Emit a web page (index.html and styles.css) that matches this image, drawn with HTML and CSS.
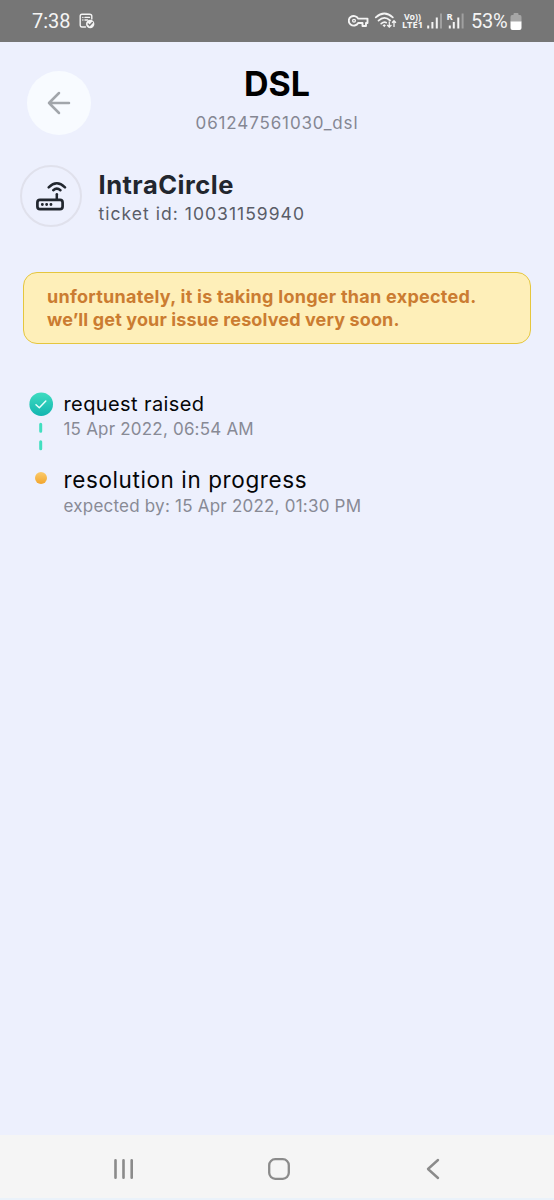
FILE: index.html
```html
<!DOCTYPE html>
<html lang="en">
<head>
<meta charset="utf-8">
<title>DSL ticket</title>
<link rel="stylesheet" href="styles.css">
</head>
<body>
<div class="screen">
  <div class="status">
    <span class="clock">7:38</span>
    <svg class="note-icon" width="17" height="17" viewBox="0 0 17 17" fill="none" stroke="#f4f4f4" stroke-width="1.4" stroke-linecap="round">
      <path d="M6.5 14H3Q1.2 14 1.2 12V3Q1.2 1.2 3 1.2H10.5Q12.8 1.2 12.8 3V6"/>
      <path d="M3.8 4.4h.1M6 4.4h4.5M3.8 7h.1M6 7h2.5"/>
      <circle cx="11.2" cy="11" r="4.2" fill="#f4f4f4" stroke="none"/>
      <path d="M9.2 11l1.4 1.4 2.8-2.8" stroke="#767676"/>
    </svg>
    <svg class="sys-icons" width="118" height="22" viewBox="0 0 118 22" fill="none" stroke="#f4f4f4">
      <path d="M10.2 8.6H19.5V13H18V16H14.5V13H10.2A5 4.8 0 1 1 10.2 8.6Z" stroke-width="1.9" stroke-linejoin="round"/>
      <circle cx="6" cy="10.8" r="1.4" stroke-width="1.3"/>
      <g stroke-width="1.7" stroke-linecap="round">
        <path d="M27.8 7.4Q36.3-.4 44.8 7.4"/><path d="M30.5 10.7Q36.3 5.2 42.1 10.5"/><path d="M33.2 13.6Q36.3 11 38.2 12.7"/>
      </g>
      <path d="M34.5 15.2l1.8 2 1.6-2-1.6-1Z" fill="#f4f4f4" stroke="none"/>
      <path d="M41.3 11.5V17M39.2 15l2.1 2.1 2.1-2.1M46 17v-6M44.1 12.8l1.9-2 1.9 2" stroke-width="1.3"/>
      <g class="net-label" fill="#f4f4f4" stroke="none">
        <text x="56" y="9.6" textLength="17" lengthAdjust="spacingAndGlyphs">Vo))</text>
        <text x="54" y="18.4" textLength="21" lengthAdjust="spacingAndGlyphs">LTE1</text>
        <text x="98.5" y="9.6">R</text>
      </g>
      <g stroke-width="2">
        <path d="M80.2 15.5V18.5M84.4 12V18.5M88.8 7.5V18.5"/>
        <path d="M93 3.5V18.5" stroke="#a0a0a0"/>
        <path d="M101.8 15.5V18.5M105.8 12V18.5M110.3 7.5V18.5"/>
        <path d="M114.6 3.5V18.5" stroke="#a0a0a0"/>
      </g>
    </svg>
    <span class="percent">53%</span>
    <svg class="battery" width="12" height="18" viewBox="0 0 12 18">
      <path d="M3.5 1Q3.5 0 4.5 0H7.5Q8.5 0 8.5 1V2H10Q11.5 2 11.5 4V9H.5V4Q.5 2 2 2H3.5Z" fill="#a6a6a6"/>
      <path d="M.5 8.6H11.5V15Q11.5 17 9.5 17H2.5Q.5 17 .5 15Z" fill="#fff"/>
    </svg>
  </div>

  <header class="header">
    <div class="back">
      <svg width="24" height="24" viewBox="0 0 24 24" fill="none" stroke="#a2a6ab" stroke-width="2.5" stroke-linecap="round" stroke-linejoin="round"><path d="M22 12H2M12 2L2 12L12 22"/></svg>
    </div>
    <div class="heading">
      <h1 class="title">DSL</h1>
      <div class="account">061247561030_dsl</div>
    </div>
  </header>

  <section class="ticket">
    <div class="device">
      <svg width="32" height="32" viewBox="0 0 32 32" fill="none" stroke="#22272f" stroke-linecap="round">
        <rect x="2.4" y="19.8" width="25.2" height="9.4" rx="2.6" stroke-width="2.7"/>
        <path d="M21.8 18.8V14.2" stroke-width="2.5"/>
        <path d="M13.7 7.3Q21.8-.8 30 7.3M18.3 10.2Q21.8 7.1 25.4 10.2" stroke-width="2.5"/>
        <path d="M7.3 24.5h.1M11.6 24.5h.1M15.9 24.5h.1" stroke-width="2.8"/>
      </svg>
    </div>
    <div class="ticket-text">
      <div class="name">IntraCircle</div>
      <div class="ticket-id">ticket id: 10031159940</div>
    </div>
  </section>

  <section class="alert">
    <div class="alert-first">unfortunately, it is taking longer than expected.</div>
    <div class="alert-second">we’ll get your issue resolved very soon.</div>
  </section>

  <section class="timeline">
    <div class="step">
      <svg class="marker" width="24" height="62" viewBox="0 0 24 62" fill="none" stroke-linecap="round">
        <defs><linearGradient id="teal" x1="0" y1="0" x2="0" y2="1"><stop offset="0" stop-color="#3fdcc0"/><stop offset="1" stop-color="#12b5b0"/></linearGradient></defs>
        <circle cx="12.2" cy="12.2" r="11.8" fill="url(#teal)"/>
        <path d="M7 12.7l3.3 3.1 6.5-6.7" stroke="#e9fffc" stroke-width="1.5" stroke-linejoin="round"/>
        <path d="M11.7 32.3V39.2M11.7 49.8V56.7" stroke="#42dfc0" stroke-width="3"/>
      </svg>
      <div>
        <div class="step-title">request raised</div>
        <div class="step-date">15 Apr 2022, 06:54 AM</div>
      </div>
    </div>
    <div class="step current">
      <div class="marker"><div class="dot"></div></div>
      <div>
        <div class="step-title">resolution in progress</div>
        <div class="step-date">expected by: 15 Apr 2022, 01:30 PM</div>
      </div>
    </div>
  </section>

  <nav class="navbar">
    <svg width="20" height="22" viewBox="0 0 20 22" fill="none" stroke="#8b8b8b" stroke-width="2.6" stroke-linecap="round"><path d="M1.5 2.3V19.7M9.5 2.3V19.7M17.7 2.3V19.7"/></svg>
    <svg width="24" height="24" viewBox="0 0 24 24" fill="none" stroke="#8b8b8b" stroke-width="2.3"><rect x="2.2" y="2.2" width="19.6" height="19.6" rx="6"/></svg>
    <svg width="20" height="22" viewBox="0 0 20 22" fill="none" stroke="#8b8b8b" stroke-width="2.4" stroke-linecap="round" stroke-linejoin="round"><path d="M15 2L5 11L15 20"/></svg>
  </nav>
</div>
</body>
</html>
```
FILE: styles.css
```css
* { box-sizing: border-box; }
body { margin: 0; font-family: Inter, sans-serif; }
svg { display: block; flex: none; }
.screen { width: 554px; height: 1200px; display: flex; flex-direction: column; background: #edf0fd; white-space: nowrap; }

.status { height: 42px; flex: none; display: flex; align-items: center; padding: 0 32px 0 32px; background: #767676; color: #f4f4f4; font-family: Roboto, sans-serif; font-size: 20px; }
.clock { width: 47px; }
.sys-icons { margin-left: auto; margin-right: 5px; }
.net-label { font-family: "Noto Sans", sans-serif; font-size: 9.5px; font-weight: 700; }
.percent { width: 39px; letter-spacing: -.2px; }
.battery { margin-top: 2px; }

.header { display: grid; grid-template-columns: 64px 1fr 64px; padding: 28px 27px 0; height: 123px; }
.back { width: 64px; height: 64px; margin-top: 1px; border-radius: 50%; background: #f8fbff; display: grid; place-items: center; }
.heading { text-align: center; }
.title { margin: -7px 0 0; font-size: 34px; line-height: 42px; font-weight: 700; color: #000; }
.account { margin-top: 6px; font-size: 17px; line-height: 24px; letter-spacing: .87px; color: #858793; }

.ticket { display: flex; padding-left: 20px; gap: 16.5px; height: 107px; }
.device { width: 62px; height: 62px; border: 2px solid #e0e1ec; border-radius: 50%; display: grid; place-items: center; }
.name { margin-top: 5px; font-size: 25.5px; line-height: 30px; letter-spacing: .5px; font-weight: 700; color: #22262e; }
.ticket-id { margin-top: 1px; font-size: 17.5px; line-height: 26px; letter-spacing: 1.03px; color: #5a5d68; }

.alert { height: 72px; margin: 0 23px; padding: 11.5px 23px; border: 1.5px solid #e5c63e; border-radius: 14px; background: #feefb9; color: #cb7c31; font-size: 18px; line-height: 23.5px; font-weight: 700; }
.alert-first { letter-spacing: .27px; }
.alert-second { letter-spacing: .13px; }

.timeline { padding: 48px 0 0 29px; flex: 1; }
.step { display: flex; gap: 10.5px; height: 76px; }
.marker { width: 24px; flex: none; }
.step-title { font-size: 20px; line-height: 24px; letter-spacing: .4px; color: #050608; }
.step-date { padding-top: .5px; font-size: 17px; line-height: 24px; letter-spacing: .2px; color: #888a95; }
.current .step-title { font-size: 22.5px; line-height: 28px; margin-top: -2px; letter-spacing: .6px; }
.current .step-date { padding-top: 0; letter-spacing: .22px; }
.dot { width: 12px; height: 12px; margin: 4px 0 0 6px; border-radius: 50%; background: linear-gradient(#fbcb6c, #f2a52c); }

.navbar { height: 65px; flex: none; display: flex; align-items: center; justify-content: space-between; padding: 4px 111px 0 114px; background: #f5f5f5; border-bottom: 2px solid #eaf2fa; }
```
